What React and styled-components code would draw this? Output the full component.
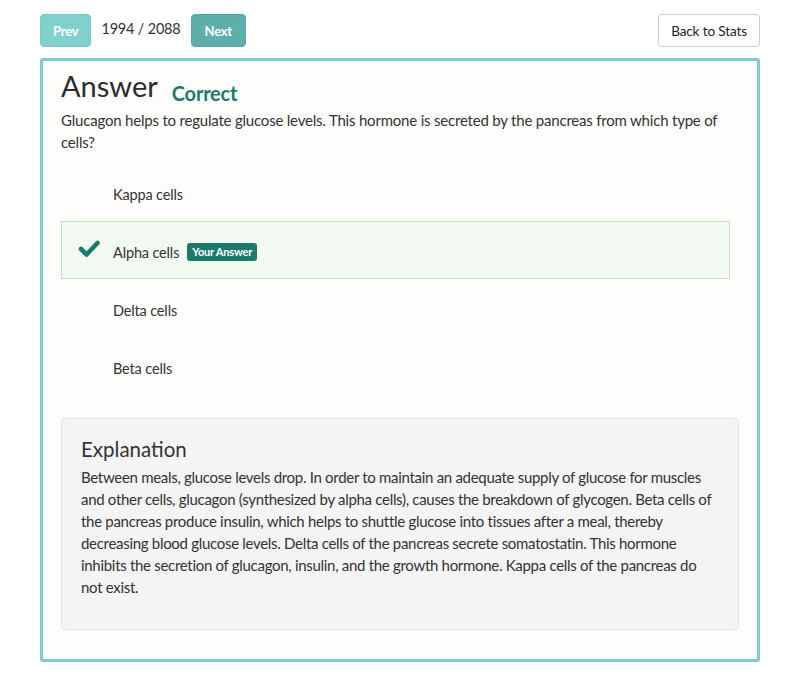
import React from 'react'
import styled, { createGlobalStyle } from 'styled-components'

const Global = createGlobalStyle`
  body {
    margin: 0;
    background: #ffffff;
    font-family: Lato, "Open Sans", sans-serif;
    color: #333;
  }
`

const Page = styled.div`
  padding: 14px 40px 0 40px;
`

const TopBar = styled.div`
  display: flex;
  align-items: center;
  height: 33px;
  margin-bottom: 11px;
`

const NavButton = styled.button`
  height: 33px;
  padding: 0 ${p => (p.dark ? '13px' : '12px')};
  border: 1px solid ${p => (p.dark ? '#55a9a5' : '#76c9c6')};
  border-radius: 4px;
  background: ${p => (p.dark ? '#5eaeaa' : '#80d0cd')};
  color: #fff;
  font-family: Lato, sans-serif;
  font-weight: 700;
  font-size: 13px;
  letter-spacing: -0.2px;
  cursor: pointer;
`

const Counter = styled.span`
  font-size: 14.5px;
  letter-spacing: -0.2px;
  color: #333;
  margin: 0 10px;
  position: relative;
  top: -2px;
`

const BackButton = styled.button`
  margin-left: auto;
  height: 33px;
  padding: 0 12px;
  border: 1px solid #ccc;
  border-radius: 4px;
  background: #fff;
  color: #222;
  font-family: Lato, sans-serif;
  font-size: 13.5px;
  letter-spacing: -0.1px;
`

const Card = styled.div`
  border: 3px solid #7ecfcc;
  border-radius: 3px;
  background: #fefdfb;
  padding: 8px 18px 29px 18px;
`

const HeadRow = styled.div`
  display: flex;
  align-items: baseline;
`

const Title = styled.h1`
  margin: 0;
  font-size: 29px;
  line-height: 34px;
  font-weight: 400;
  color: #2c2c2c;
`

const Status = styled.span`
  margin-left: 14px;
  font-size: 20px;
  font-weight: 700;
  letter-spacing: -0.2px;
  color: #1b7a6a;
  position: relative;
  top: 4px;
`

const Question = styled.p`
  margin: 6px 0 0 0;
  max-width: 660px;
  font-size: 15px;
  letter-spacing: -0.2px;
  line-height: 22px;
  color: #333;
`

const Options = styled.div`
  margin-top: 10px;
  width: 669px;
`

const Option = styled.div`
  display: flex;
  align-items: center;
  height: 58px;
  box-sizing: border-box;
  padding: 4px 0 0 16px;
  border: 1px solid ${p => (p.selected ? '#c4e3c4' : 'transparent')};
  background: ${p => (p.selected ? '#f3faf2' : 'transparent')};
  font-size: 14.5px;
  letter-spacing: -0.15px;
  color: #333;
`

const Mark = styled.span`
  width: 35px;
  display: flex;
  align-items: center;
  position: relative;
  top: -3px;
`

const Badge = styled.span`
  margin-left: 8px;
  background: #1b7a6a;
  color: #fff;
  font-size: 11px;
  font-weight: 700;
  letter-spacing: -0.2px;
  padding: 2px 5px 3px;
  border-radius: 3px;
`

const Explain = styled.div`
  margin-top: 23px;
  background: #f4f4f4;
  border: 1px solid #e2e2e2;
  border-radius: 4px;
  padding: 17px 19px 31px 19px;
`

const ExplainTitle = styled.h2`
  margin: 0 0 4px 0;
  font-size: 20.5px;
  line-height: 26px;
  font-weight: 400;
  color: #333;
`

const ExplainText = styled.p`
  margin: 0;
  font-size: 15px;
  letter-spacing: -0.3px;
  line-height: 22px;
  color: #333;
`

const Check = () => (
  <svg width="22" height="18" viewBox="0 0 22 18">
    <path d="M3 9 L8.5 14.5 L19.5 3" fill="none" stroke="#1b7a6a" strokeWidth="4.6" strokeLinecap="round" strokeLinejoin="round" />
  </svg>
)

const options = [
  { text: 'Kappa cells' },
  { text: 'Alpha cells', selected: true },
  { text: 'Delta cells' },
  { text: 'Beta cells' },
]

const App = () => {
  return (
    <Page>
      <Global />
      <TopBar>
        <NavButton>Prev</NavButton>
        <Counter>1994 / 2088</Counter>
        <NavButton dark>Next</NavButton>
        <BackButton>Back to Stats</BackButton>
      </TopBar>
      <Card>
        <HeadRow>
          <Title>Answer</Title>
          <Status>Correct</Status>
        </HeadRow>
        <Question>
          Glucagon helps to regulate glucose levels. This hormone is secreted by the pancreas from which type of cells?
        </Question>
        <Options>
          {options.map(o => (
            <Option key={o.text} selected={o.selected}>
              <Mark>{o.selected && <Check />}</Mark>
              {o.text}
              {o.selected && <Badge>Your Answer</Badge>}
            </Option>
          ))}
        </Options>
        <Explain>
          <ExplainTitle>Explanation</ExplainTitle>
          <ExplainText>
            Between meals, glucose levels drop. In order to maintain an adequate supply of glucose for muscles and other cells, glucagon (synthesized by alpha cells), causes the breakdown of glycogen. Beta cells of the pancreas produce insulin, which helps to shuttle glucose into tissues after a meal, thereby decreasing blood glucose levels. Delta cells of the pancreas secrete somatostatin. This hormone inhibits the secretion of glucagon, insulin, and the growth hormone. Kappa cells of the pancreas do not exist.
          </ExplainText>
        </Explain>
      </Card>
    </Page>
  )
}

export default App
